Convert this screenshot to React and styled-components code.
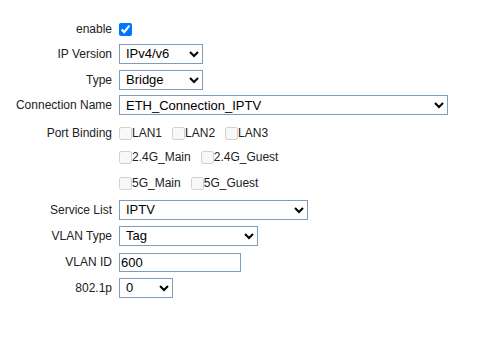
import styled, { createGlobalStyle } from 'styled-components';

const Global = createGlobalStyle`
  body {
    margin: 0;
    background: #fff;
    font-family: Arial, "Liberation Sans", sans-serif;
    font-size: 12px;
    color: #222;
  }
`;

const Form = styled.div`
  display: grid;
  grid-template-columns: 112px 1fr;
  column-gap: 7px;
  padding-top: 17px;
`;

const Label = styled.div`
  height: ${p => p.h || 26}px;
  padding-top: ${p => p.pt || 0}px;
  display: flex;
  align-items: center;
  justify-content: flex-end;
  white-space: nowrap;
`;

const Cell = styled.div`
  height: ${p => p.h || 26}px;
  padding-top: ${p => p.pt || 0}px;
  display: flex;
  align-items: center;
  gap: 10px;
`;

const Select = styled.select`
  width: ${p => p.w}px;
  height: 20px;
  border: 1px solid #7f9db9;
  border-radius: 0;
  background: #fff;
  font-family: Arial, "Liberation Sans", sans-serif;
  font-size: 13px;
  color: #000;
  padding: 0 2px;
  margin: 0;
`;

const Input = styled.input`
  width: ${p => p.w}px;
  height: 19px;
  box-sizing: border-box;
  border: 1px solid #7f9db9;
  font-family: Arial, "Liberation Sans", sans-serif;
  font-size: 13px;
  color: #000;
  padding: 0 1px;
  margin: 0;
  outline: none;
`;

const Check = styled.input.attrs({ type: 'checkbox' })`
  width: 13px;
  height: 13px;
  margin: 0;
`;

const Item = styled.label`
  display: flex;
  align-items: center;
  font-size: 12px;
  color: #222;
`;

const Row = ({ label, h, pt, children }) => (
  <>
    <Label h={h} pt={pt}>{label}</Label>
    <Cell h={h} pt={pt}>{children}</Cell>
  </>
);

const Port = ({ name }) => (
  <Item>
    <Check disabled />
    {name}
  </Item>
);

const App = () => (
  <>
    <Global />
    <Form>
      <Row label="enable" h={24}>
        <Check defaultChecked />
      </Row>
      <Row label="IP Version" h={25}>
        <Select w={84} defaultValue="IPv4/v6">
          <option>IPv4</option>
          <option>IPv6</option>
          <option>IPv4/v6</option>
        </Select>
      </Row>
      <Row label="Type" h={27}>
        <Select w={84} defaultValue="Bridge">
          <option>Route</option>
          <option>Bridge</option>
        </Select>
      </Row>
      <Row label="Connection Name" h={24}>
        <Select w={329}>
          <option>ETH_Connection_IPTV</option>
        </Select>
      </Row>
      <Row label="Port Binding" h={24} pt={4}>
        <Port name="LAN1" />
        <Port name="LAN2" />
        <Port name="LAN3" />
      </Row>
      <Row label="" h={24}>
        <Port name="2.4G_Main" />
        <Port name="2.4G_Guest" />
      </Row>
      <Row label="" h={28}>
        <Port name="5G_Main" />
        <Port name="5G_Guest" />
      </Row>
      <Row label="Service List" h={25}>
        <Select w={189}>
          <option>IPTV</option>
        </Select>
      </Row>
      <Row label="VLAN Type" h={27}>
        <Select w={139}>
          <option>Tag</option>
          <option>Untag</option>
        </Select>
      </Row>
      <Row label="VLAN ID" h={26}>
        <Input w={122} defaultValue="600" />
      </Row>
      <Row label="802.1p" h={25}>
        <Select w={54}>
          <option>0</option>
        </Select>
      </Row>
    </Form>
  </>
);

export default App;
